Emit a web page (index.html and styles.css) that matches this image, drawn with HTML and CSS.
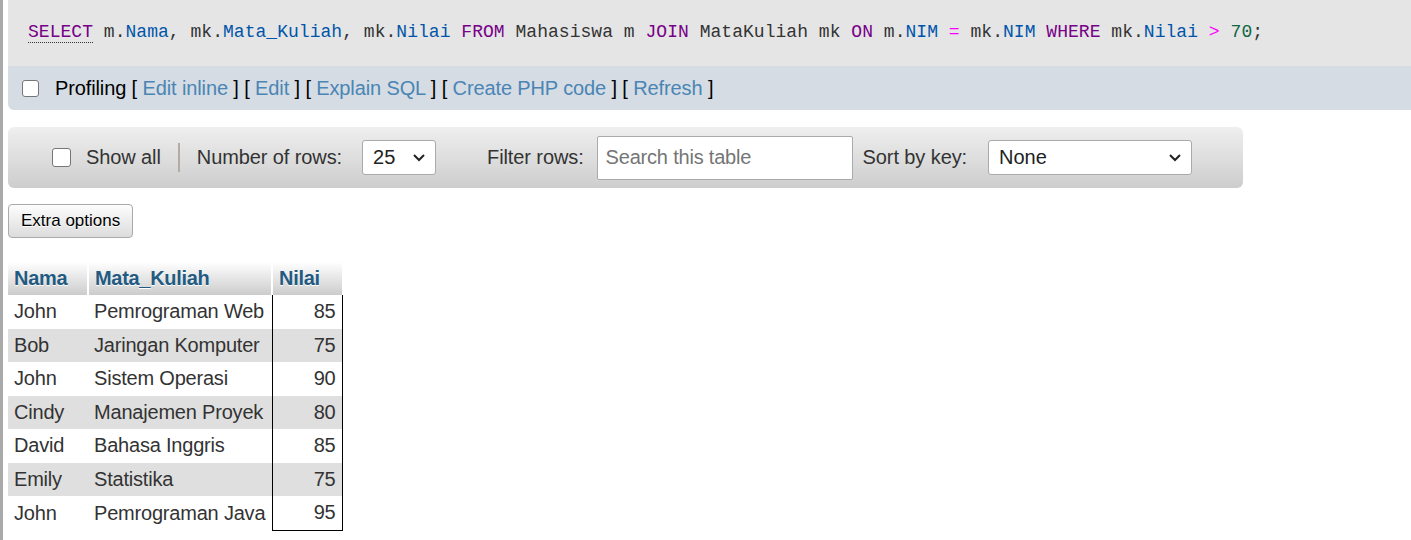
FILE: index.html
```html
<!DOCTYPE html>
<html>
<head>
<meta charset="utf-8">
<link rel="stylesheet" href="styles.css">
</head>
<body>
<div class="frame">
  <div class="edge"></div>
  <main class="content">
    <section class="sqlbox">
      <code class="sql"><span class="kw sel">SELECT</span> m.<span class="var">Nama</span>, mk.<span class="var">Mata_Kuliah</span>, mk.<span class="var">Nilai</span> <span class="kw">FROM</span> Mahasiswa m <span class="kw">JOIN</span> MataKuliah mk <span class="kw">ON</span> m.<span class="var">NIM</span> <span class="op">=</span> mk.<span class="var">NIM</span> <span class="kw">WHERE</span> mk.<span class="var">Nilai</span> <span class="op">&gt;</span> <span class="num">70</span>;</code>
    </section>
    <section class="profbar">
      <span class="cb cb-sm"></span>
      <span class="proftext">Profiling [ <a>Edit inline</a> ] [ <a>Edit</a> ] [ <a>Explain SQL</a> ] [ <a>Create PHP code</a> ] [ <a>Refresh</a> ]</span>
    </section>

    <section class="toolbar">
      <span class="cb cb-lg"></span>
      <span class="lbl showall">Show all</span>
      <span class="sep"></span>
      <span class="lbl">Number of rows:</span>
      <span class="select sel-rows">25<svg class="chev" width="14" height="9" viewBox="0 0 14 9"><path d="M2 2 L7 7 L12 2" fill="none" stroke="#222" stroke-width="2"/></svg></span>
      <span class="lbl filter">Filter rows:</span>
      <span class="search">Search this table</span>
      <span class="lbl">Sort by key:</span>
      <span class="select sel-key">None<svg class="chev" width="14" height="9" viewBox="0 0 14 9"><path d="M2 2 L7 7 L12 2" fill="none" stroke="#222" stroke-width="2"/></svg></span>
    </section>

    <div class="btnrow"><span class="btn">Extra options</span></div>

    <table class="data">
      <thead>
        <tr><th class="c1">Nama</th><th class="c2">Mata_Kuliah</th><th class="c3">Nilai</th></tr>
      </thead>
      <tbody>
        <tr><td>John</td><td>Pemrograman Web</td><td class="num">85</td></tr>
        <tr><td>Bob</td><td>Jaringan Komputer</td><td class="num">75</td></tr>
        <tr><td>John</td><td>Sistem Operasi</td><td class="num">90</td></tr>
        <tr><td>Cindy</td><td>Manajemen Proyek</td><td class="num">80</td></tr>
        <tr><td>David</td><td>Bahasa Inggris</td><td class="num">85</td></tr>
        <tr><td>Emily</td><td>Statistika</td><td class="num">75</td></tr>
        <tr><td>John</td><td>Pemrograman Java</td><td class="num">95</td></tr>
      </tbody>
    </table>
  </main>
</div>
</body>
</html>
```

FILE: styles.css
```css
html, body {
  margin: 0;
  padding: 0;
  background: #fff;
}
body {
  font-family: "Liberation Sans", Arial, sans-serif;
  color: #333;
  overflow: hidden;
}
.frame {
  display: flex;
  min-height: 540px;
}
.edge {
  width: 3px;
  background: #a9a9a9;
  flex: none;
}
.content {
  flex: 1;
  padding-left: 5px;
  min-width: 0;
}
.sqlbox {
  background: #e5e5e5;
  height: 66px;
  display: flex;
  align-items: center;
  padding-left: 20px;
}
.sql {
  font-family: "Liberation Mono", "DejaVu Sans Mono", monospace;
  font-size: 18px;
  letter-spacing: 0.03px;
  color: #333;
  white-space: pre;
  position: relative;
  top: -1px;
}
.kw { color: #770088; }
.sel { border-bottom: 1px dotted #333; }
.var { color: #0055aa; }
.op { color: #ff00ff; }
.num { color: #116644; }
.profbar {
  background: #d5dce3;
  height: 44px;
  display: flex;
  align-items: center;
  padding-left: 14px;
  border-bottom-left-radius: 6px;
}
.proftext {
  font-size: 20px;
  color: #000;
  margin-left: 16px;
  letter-spacing: -0.12px;
}
.proftext a {
  color: #4a85b5;
}
.cb {
  display: inline-block;
  background: #fff;
  border: 1.5px solid #767676;
  border-radius: 3px;
  box-sizing: border-box;
  flex: none;
}
.cb-sm { width: 17px; height: 17px; }
.cb-lg { width: 19px; height: 19px; }

.toolbar {
  margin-top: 17px;
  width: 1235px;
  height: 61px;
  box-sizing: border-box;
  border-radius: 6px;
  background: linear-gradient(#efefef, #cdcdcd);
  display: flex;
  align-items: center;
  padding-left: 44px;
  font-size: 20px;
  color: #333;
}
.lbl { white-space: nowrap; letter-spacing: -0.1px; }
.showall { margin-left: 15px; }
.sep {
  width: 2px;
  height: 29px;
  background: #b2aca4;
  margin: 0 17px;
}
.select {
  display: flex;
  align-items: center;
  justify-content: space-between;
  background: #fff;
  border: 1px solid #aaa;
  border-radius: 3px;
  height: 35px;
  box-sizing: border-box;
  padding: 0 9px 0 10px;
  color: #222;
  font-size: 20px;
}
.sel-rows { width: 74px; margin-left: 20px; }
.sel-key { width: 204px; margin-left: 21px; }
.filter { margin-left: 51px; }
.search {
  margin-left: 13px;
  width: 256px;
  height: 44px;
  box-sizing: border-box;
  background: #fff;
  border: 1px solid #aaa;
  border-radius: 2px;
  display: flex;
  align-items: center;
  padding-left: 8px;
  color: #757575;
  margin-right: 10px;
  letter-spacing: -0.2px;
}
.btnrow {
  margin-top: 16px;
}
.btn {
  display: inline-flex;
  align-items: center;
  height: 34px;
  box-sizing: border-box;
  padding: 0 12px;
  border: 1px solid #aaa;
  border-radius: 4px;
  background: linear-gradient(#fdfdfd, #dcdcdc);
  font-size: 17px;
  color: #000;
  text-shadow: 0 1px 0 #fff;
  letter-spacing: 0;
}
.data {
  margin-top: 24px;
  border-collapse: collapse;
  font-size: 20px;
}
.data th {
  background: linear-gradient(#ffffff, #cccccc);
  color: #235a81;
  font-weight: bold;
  text-shadow: 0 1px 0 #fff;
  text-align: left;
  height: 33px;
  padding: 0 6px;
  box-sizing: border-box;
  border-right: 2px solid #fff;
  letter-spacing: -0.3px;
}
.data th.c3 { border-right: 0; }
.c1 { width: 80px; }
.c2 { width: 184px; }
.c3 { width: 70px; }
.data td {
  height: 33.5px;
  padding: 0 6px;
  color: #333;
  white-space: nowrap;
  letter-spacing: -0.2px;
}
.data tbody tr:nth-child(even) td { background: #dfdfdf; }
.data td.num {
  text-align: right;
  color: #333;
  border-left: 1px solid #000;
  border-right: 1px solid #000;
}
.data tbody tr:last-child td.num { border-bottom: 1px solid #000; }
```
